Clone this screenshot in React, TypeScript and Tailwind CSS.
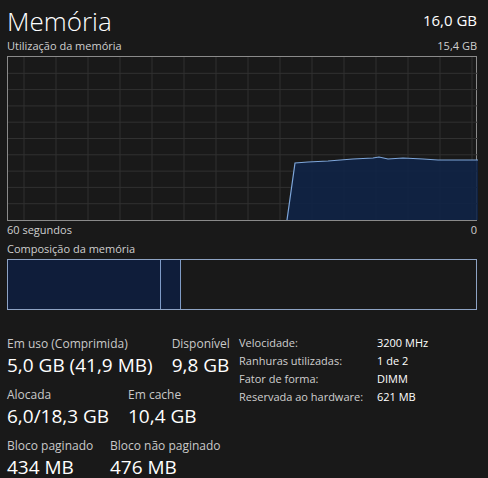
import React from "react";

const font = { fontFamily: '"Open Sans", "Noto Sans", sans-serif' };

const points: [number, number][] = [
  [279, 163],
  [287, 106],
  [300, 105],
  [320, 104],
  [345, 102],
  [365, 101],
  [371, 100],
  [380, 102],
  [395, 101],
  [415, 102],
  [430, 103],
  [470, 103],
];

const MemoryChart = () => {
  const vLines = Array.from({ length: 15 }, (_, i) => 16 + i * 32);
  const hLines = Array.from({ length: 9 }, (_, i) => ((i + 1) * 163) / 10);
  const line = points.map(([x, y]) => `${x},${y}`).join(" ");
  const area = `${line} 470,163 279,163`;
  return (
    <svg width="470" height="163" viewBox="0 0 470 163" className="block">
      {vLines.map((x) => (
        <line key={"v" + x} x1={x} y1={0} x2={x} y2={163} stroke="#313131" strokeWidth="1" />
      ))}
      {hLines.map((y) => (
        <line key={"h" + y} x1={0} y1={y} x2={470} y2={y} stroke="#313131" strokeWidth="1" />
      ))}
      <polygon points={area} fill="#0f2346" fillOpacity="0.9" />
      <polyline points={line} fill="none" stroke="#7ea6da" strokeWidth="1.2" />
    </svg>
  );
};

const Stat = ({ label, value }: { label: string; value: string }) => (
  <div className="flex flex-col">
    <span className="text-[12px] leading-[16px] text-[#c9c9c9]">{label}</span>
    <span className="text-[19px] leading-[26px] text-white">{value}</span>
  </div>
);

const specs = [
  ["Velocidade:", "3200 MHz"],
  ["Ranhuras utilizadas:", "1 de 2"],
  ["Fator de forma:", "DIMM"],
  ["Reservada ao hardware:", "621 MB"],
];

export default function App() {
  return (
    <div className="w-[488px] h-[478px] overflow-hidden bg-[#191919] pl-[7px] pr-[11px]" style={font}>
      <div className="flex items-end justify-between h-[38px]">
        <span className="text-[26px] font-light leading-[34px] text-white">Memória</span>
        <span className="text-[15px] leading-[20px] text-white mb-[8px]">16,0 GB</span>
      </div>
      <div className="flex justify-between h-[18px] text-[11px] leading-[16px] text-[#cfcfcf]">
        <span>Utilização da memória</span>
        <span>15,4 GB</span>
      </div>
      <div className="w-[470px] h-[165px] border border-[#8a8a8a]">
        <MemoryChart />
      </div>
      <div className="flex justify-between h-[18px] text-[11px] leading-[18px] text-[#cfcfcf]">
        <span>60 segundos</span>
        <span>0</span>
      </div>
      <div className="h-[20px] text-[11px] leading-[20px] text-[#cfcfcf]">Composição da memória</div>
      <div className="flex w-[470px] h-[51px] border border-[#8ea3c4]">
        <div className="w-[153px] bg-[#0f1d3a] border-r border-[#7f9bc6]" />
        <div className="w-[20px] bg-[#0f1d3a] border-r border-[#7f9bc6]" />
        <div className="flex-1" />
      </div>
      <div className="flex mt-[26px]">
        <div className="w-[232px] flex flex-col gap-[9px]">
          <div className="flex gap-[19px]">
            <Stat label="Em uso (Comprimida)" value="5,0 GB (41,9 MB)" />
            <Stat label="Disponível" value="9,8 GB" />
          </div>
          <div className="flex gap-[8px]">
            <div className="w-[113px]">
              <Stat label="Alocada" value="6,0/18,3 GB" />
            </div>
            <Stat label="Em cache" value="10,4 GB" />
          </div>
          <div className="flex gap-[8px]">
            <div className="w-[95px]">
              <Stat label="Bloco paginado" value="434 MB" />
            </div>
            <Stat label="Bloco não paginado" value="476 MB" />
          </div>
        </div>
        <div className="flex flex-col text-[11px] leading-[18px] text-[#cfcfcf] -mt-[2px]">
          {specs.map(([k, v]) => (
            <div key={k} className="flex">
              <span className="w-[138px]">{k}</span>
              <span className="text-white">{v}</span>
            </div>
          ))}
        </div>
      </div>
    </div>
  );
}
